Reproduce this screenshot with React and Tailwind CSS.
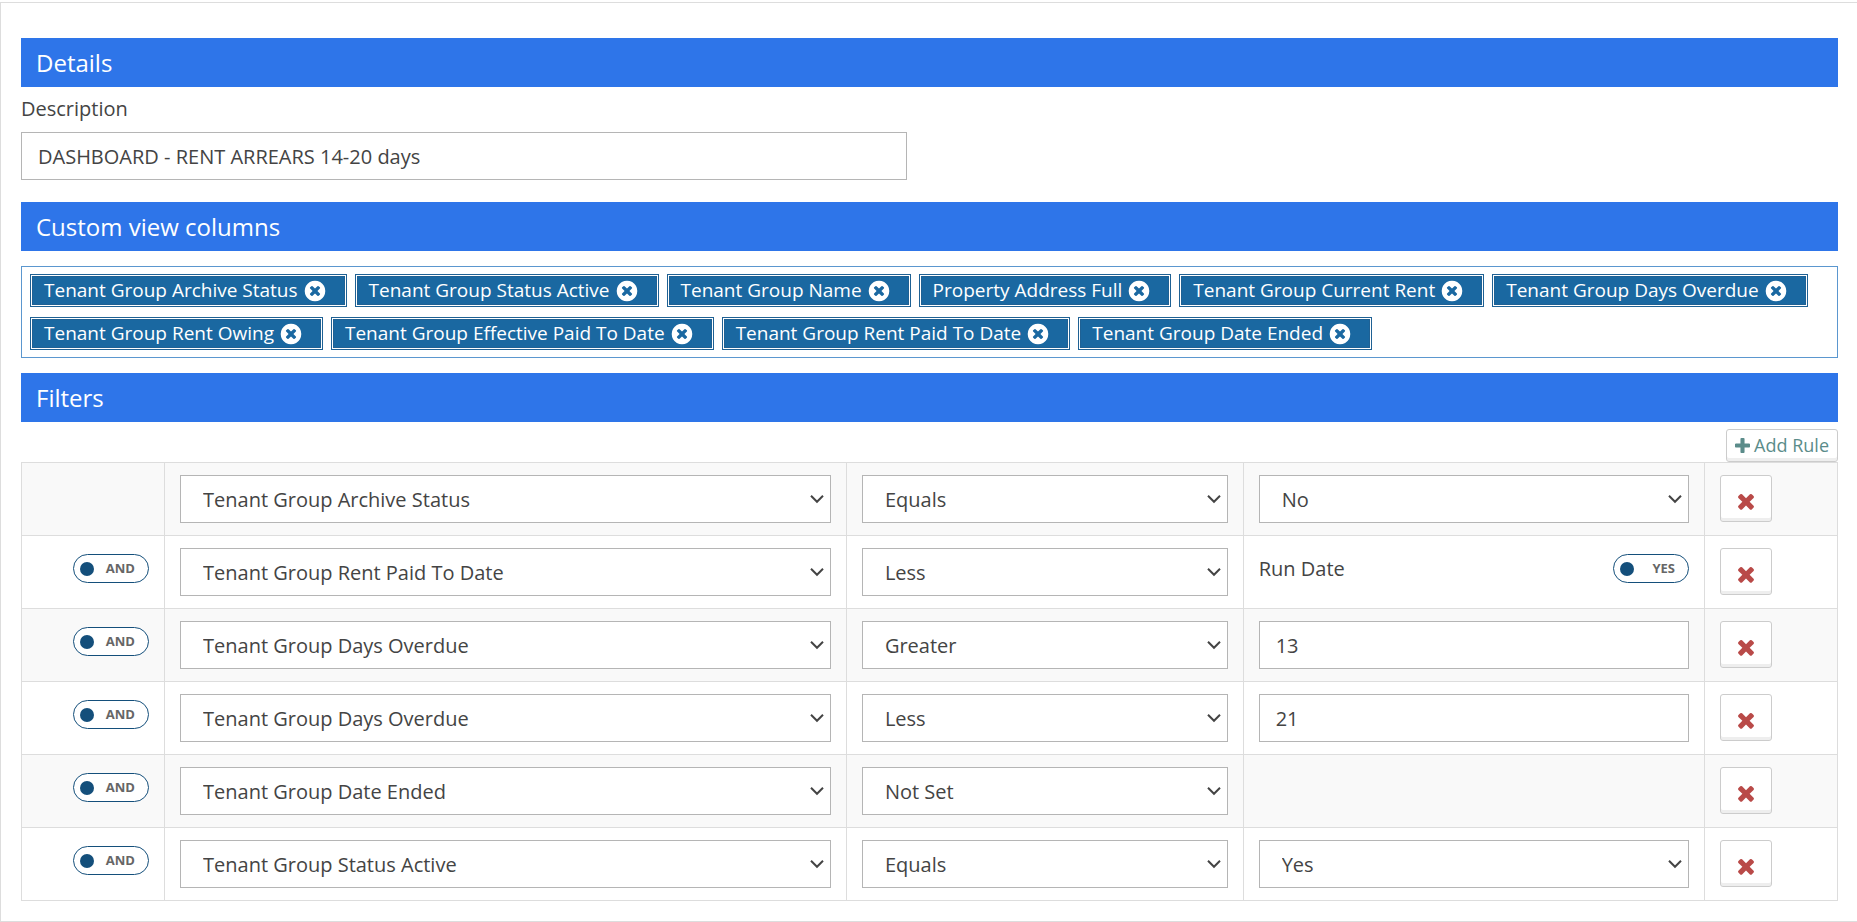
import React, { useState } from "react";

const COLUMNS = [
  "Tenant Group Archive Status",
  "Tenant Group Status Active",
  "Tenant Group Name",
  "Property Address Full",
  "Tenant Group Current Rent",
  "Tenant Group Days Overdue",
  "Tenant Group Rent Owing",
  "Tenant Group Effective Paid To Date",
  "Tenant Group Rent Paid To Date",
  "Tenant Group Date Ended",
];

const OPERATORS = ["Equals", "Less", "Greater", "Not Set"];

const RULES = [
  { id: 1, field: "Tenant Group Archive Status", operator: "Equals", type: "select", value: "No" },
  { id: 2, join: "AND", field: "Tenant Group Rent Paid To Date", operator: "Less", type: "runDate", value: "YES" },
  { id: 3, join: "AND", field: "Tenant Group Days Overdue", operator: "Greater", type: "text", value: "13" },
  { id: 4, join: "AND", field: "Tenant Group Days Overdue", operator: "Less", type: "text", value: "21" },
  { id: 5, join: "AND", field: "Tenant Group Date Ended", operator: "Not Set", type: "none" },
  { id: 6, join: "AND", field: "Tenant Group Status Active", operator: "Equals", type: "select", value: "Yes" },
];

const TimesCircleIcon = () => (
  <svg viewBox="0 0 1792 1792" className="size-6" fill="currentColor" aria-hidden="true">
    <path d="M1277 1122q0-26-19-45l-181-181 181-181q19-19 19-45 0-27-19-46l-90-90q-19-19-46-19-26 0-45 19l-181 181-181-181q-19-19-45-19-27 0-46 19l-90 90q-19 19-19 46 0 26 19 45l181 181-181 181q-19 19-19 45 0 27 19 46l90 90q19 19 46 19 26 0 45-19l181-181 181 181q19 19 45 19 27 0 46-19l90-90q19-19 19-46zm387-226q0 209-103 385.5t-279.5 279.5-385.5 103-385.5-103-279.5-279.5-103-385.5 103-385.5 279.5-279.5 385.5-103 385.5 103 279.5 279.5 103 385.5z" />
  </svg>
);

const TimesIcon = () => (
  <svg viewBox="0 0 1792 1792" className="size-6" fill="currentColor" aria-hidden="true">
    <path d="M1490 1322q0 40-28 68l-136 136q-28 28-68 28t-68-28l-294-294-294 294q-28 28-68 28t-68-28l-136-136q-28-28-28-68t28-68l294-294-294-294q-28-28-28-68t28-68l136-136q28-28 68-28t68 28l294 294 294-294q28-28 68-28t68 28l136 136q28 28 28 68t-28 68l-294 294 294 294q28 28 28 68z" />
  </svg>
);

const PlusIcon = () => (
  <svg viewBox="192 128 1408 1408" className="size-[15px]" fill="currentColor" aria-hidden="true">
    <path d="M1600 736v192q0 40-28 68t-68 28h-416v416q0 40-28 68t-68 28h-192q-40 0-68-28t-28-68v-416h-416q-40 0-68-28t-28-68v-192q0-40 28-68t68-28h416v-416q0-40 28-68t68-28h192q40 0 68 28t28 68v416h416q40 0 68 28t28 68z" />
  </svg>
);

const ChevronIcon = () => (
  <svg
    viewBox="0 0 14 10"
    className="pointer-events-none absolute top-[19px] right-[7px] h-[10px] w-[14px] text-[#444]"
    fill="none"
    stroke="currentColor"
    strokeWidth="2"
    aria-hidden="true"
  >
    <path d="M1 1.8 7 7.8 13 1.8" />
  </svg>
);

const SectionHeader = ({ children }) => (
  <h2 className="bg-[#2e75e9] px-[15px] py-2 text-2xl leading-[33px] text-white">
    {children}
  </h2>
);

const Select = ({ label, value, options }) => (
  <div className="relative">
    <select
      aria-label={label}
      defaultValue={value}
      className="block h-12 w-full appearance-none border border-[#b5b5b5] bg-white pr-7 pl-[22px] text-[#444]"
    >
      {options.map((option) => (
        <option key={option}>{option}</option>
      ))}
    </select>
    <ChevronIcon />
  </div>
);

const Toggle = ({ on, off, label }) => {
  const [active, setActive] = useState(true);

  return (
    <button
      type="button"
      role="switch"
      aria-checked={active}
      aria-label={label}
      onClick={() => setActive(!active)}
      className="flex h-[29px] w-[76px] items-center justify-between rounded-full border border-[#144f7b] bg-white pr-[13px] pl-[6px] text-[13px] font-bold text-[#666]"
    >
      <span className="size-[14px] rounded-full bg-[#144f7b]"></span>
      <span>{active ? on : off}</span>
    </button>
  );
};

const RuleValue = ({ rule }) => {
  if (rule.type === "select") {
    return <Select label="Value" value={rule.value} options={["Yes", "No"]} />;
  }
  if (rule.type === "text") {
    return (
      <input
        type="text"
        aria-label="Value"
        defaultValue={rule.value}
        className="block h-12 w-full border border-[#b5b5b5] bg-white px-4 text-[#444]"
      />
    );
  }
  if (rule.type === "runDate") {
    return (
      <div className="flex items-center justify-between pt-[6px]">
        <span>Run Date</span>
        <Toggle on="YES" off="NO" label="Run Date" />
      </div>
    );
  }
  return null;
};

const App = () => {
  const [columns, setColumns] = useState(COLUMNS);
  const [rules, setRules] = useState(RULES);

  const removeColumn = (name) => setColumns(columns.filter((c) => c !== name));
  const removeRule = (id) => setRules(rules.filter((r) => r.id !== id));
  const addRule = () =>
    setRules([
      ...rules,
      { id: Date.now(), join: "AND", field: COLUMNS[0], operator: "Equals", type: "text", value: "" },
    ]);

  return (
    <div className="bg-white pt-[2px] font-['Open_Sans',sans-serif] text-[20px] leading-[29px] text-[#444]">
      <main className="border-y border-l border-[#ddd] pt-[35px] pr-[19px] pb-5 pl-5">
        <section>
          <SectionHeader>Details</SectionHeader>
          <label htmlFor="description" className="block pt-[7px] pb-[9px]">
            Description
          </label>
          <input
            id="description"
            type="text"
            defaultValue="DASHBOARD - RENT ARREARS 14-20 days"
            className="block h-12 w-[886px] max-w-full border border-[#b5b5b5] bg-white px-4 text-[#444]"
          />
        </section>

        <section className="mt-[22px]">
          <SectionHeader>Custom view columns</SectionHeader>
          <ul className="mt-[15px] flex flex-wrap gap-x-2 gap-y-[10px] border border-[#5b97cf] px-2 py-[7px]">
            {columns.map((name) => (
              <li
                key={name}
                className="flex h-[33px] items-center border-3 border-double border-[#1f6194] bg-[#1a68a1] bg-clip-padding pr-[17px] pl-[11px] text-[19px] text-white"
              >
                <span>{name}</span>
                <button type="button" aria-label={`Remove ${name}`} onClick={() => removeColumn(name)} className="ml-[5px]">
                  <TimesCircleIcon />
                </button>
              </li>
            ))}
          </ul>
        </section>

        <section className="mt-[15px]">
          <SectionHeader>Filters</SectionHeader>
          <div className="flex justify-end pt-[7px]">
            <button
              type="button"
              onClick={addRule}
              className="flex h-[33px] items-center gap-1 rounded-[3px] border border-[#ccc] bg-white px-2 text-[18px] text-[#5b8c8a] shadow-[inset_0_-3px_0_#eee]"
            >
              <PlusIcon />
              Add Rule
            </button>
          </div>
          <table className="w-full table-fixed border-collapse">
            <colgroup>
              <col className="w-[143px]" />
              <col className="w-[37.55%]" />
              <col className="w-[21.85%]" />
              <col />
              <col className="w-[133px]" />
            </colgroup>
            <tbody>
              {rules.map((rule) => (
                <tr key={rule.id} className="h-[73px] align-top odd:bg-[#f9f9f9]">
                  <td className="border border-[#ddd] px-[15px] pt-[18px]">
                    {rule.join && (
                      <div className="flex justify-end">
                        <Toggle on="AND" off="OR" label="Join" />
                      </div>
                    )}
                  </td>
                  <td className="border border-[#ddd] px-[15px] py-3">
                    <Select label="Field" value={rule.field} options={COLUMNS} />
                  </td>
                  <td className="border border-[#ddd] px-[15px] py-3">
                    <Select label="Operator" value={rule.operator} options={OPERATORS} />
                  </td>
                  <td className="border border-[#ddd] px-[15px] py-3">
                    <RuleValue rule={rule} />
                  </td>
                  <td className="border border-[#ddd] px-[15px] py-3">
                    <button
                      type="button"
                      aria-label="Remove rule"
                      onClick={() => removeRule(rule.id)}
                      className="flex h-[47px] w-[52px] items-center justify-center rounded-[3px] border border-[#ccc] bg-white pt-1 text-[#b94a48] shadow-[inset_0_-3px_0_#eee]"
                    >
                      <TimesIcon />
                    </button>
                  </td>
                </tr>
              ))}
            </tbody>
          </table>
        </section>
      </main>
    </div>
  );
};

export default App;
